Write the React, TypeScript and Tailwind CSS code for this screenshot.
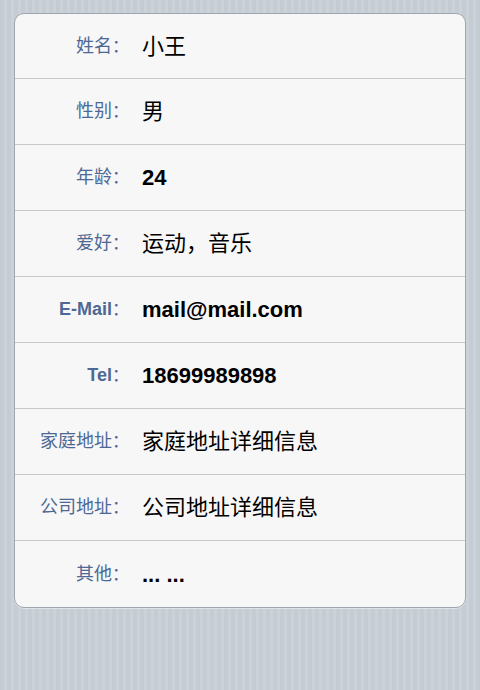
import React from 'react'

const rows = [
  { label: '姓名', value: '小王' },
  { label: '性别', value: '男' },
  { label: '年龄', value: '24' },
  { label: '爱好', value: '运动，音乐' },
  { label: 'E-Mail', value: 'mail@mail.com' },
  { label: 'Tel', value: '18699989898' },
  { label: '家庭地址', value: '家庭地址详细信息' },
  { label: '公司地址', value: '公司地址详细信息' },
  { label: '其他', value: '... ...' },
]

// latin runs are bold (Helvetica-style), CJK runs stay regular
function Mixed({ text }: { text: string }) {
  const parts = text.match(/[\x00-\x7f]+|[^\x00-\x7f]+/g) ?? []
  return (
    <>
      {parts.map((p, i) => (
        <span key={i} className={/^[\x00-\x7f]+$/.test(p) ? 'font-bold' : 'font-normal'}>
          {p}
        </span>
      ))}
    </>
  )
}

export default function App() {
  return (
    <div className="h-[690px] w-[480px] overflow-hidden bg-[repeating-linear-gradient(90deg,#c5ccd4_0px,#c5ccd4_4px,#cbd2d8_4px,#cbd2d8_7px)] px-[14px] pt-[13px] font-['Liberation_Sans','Noto_Sans_CJK_SC',sans-serif]">
      <div className="rounded-[10px] border border-[#9fa6ae] bg-[#f7f7f7] shadow-[0_1px_0_#dfe3e7]">
        {rows.map((r, i) => (
          <div
            key={r.label}
            className={`flex items-center ${i === 0 ? 'h-[65px]' : 'h-[66px]'} ${i < rows.length - 1 ? 'border-b border-[#c8c8c8]' : ''}`}
          >
            <div className="w-[114px] shrink-0 whitespace-nowrap text-right text-[18px] text-[#4e6895]">
              <Mixed text={r.label} />
              <span className="font-normal text-[17px]">：</span>
            </div>
            <div className="pl-[13px] whitespace-nowrap text-[22px] text-black">
              <Mixed text={r.value} />
            </div>
          </div>
        ))}
      </div>
    </div>
  )
}
